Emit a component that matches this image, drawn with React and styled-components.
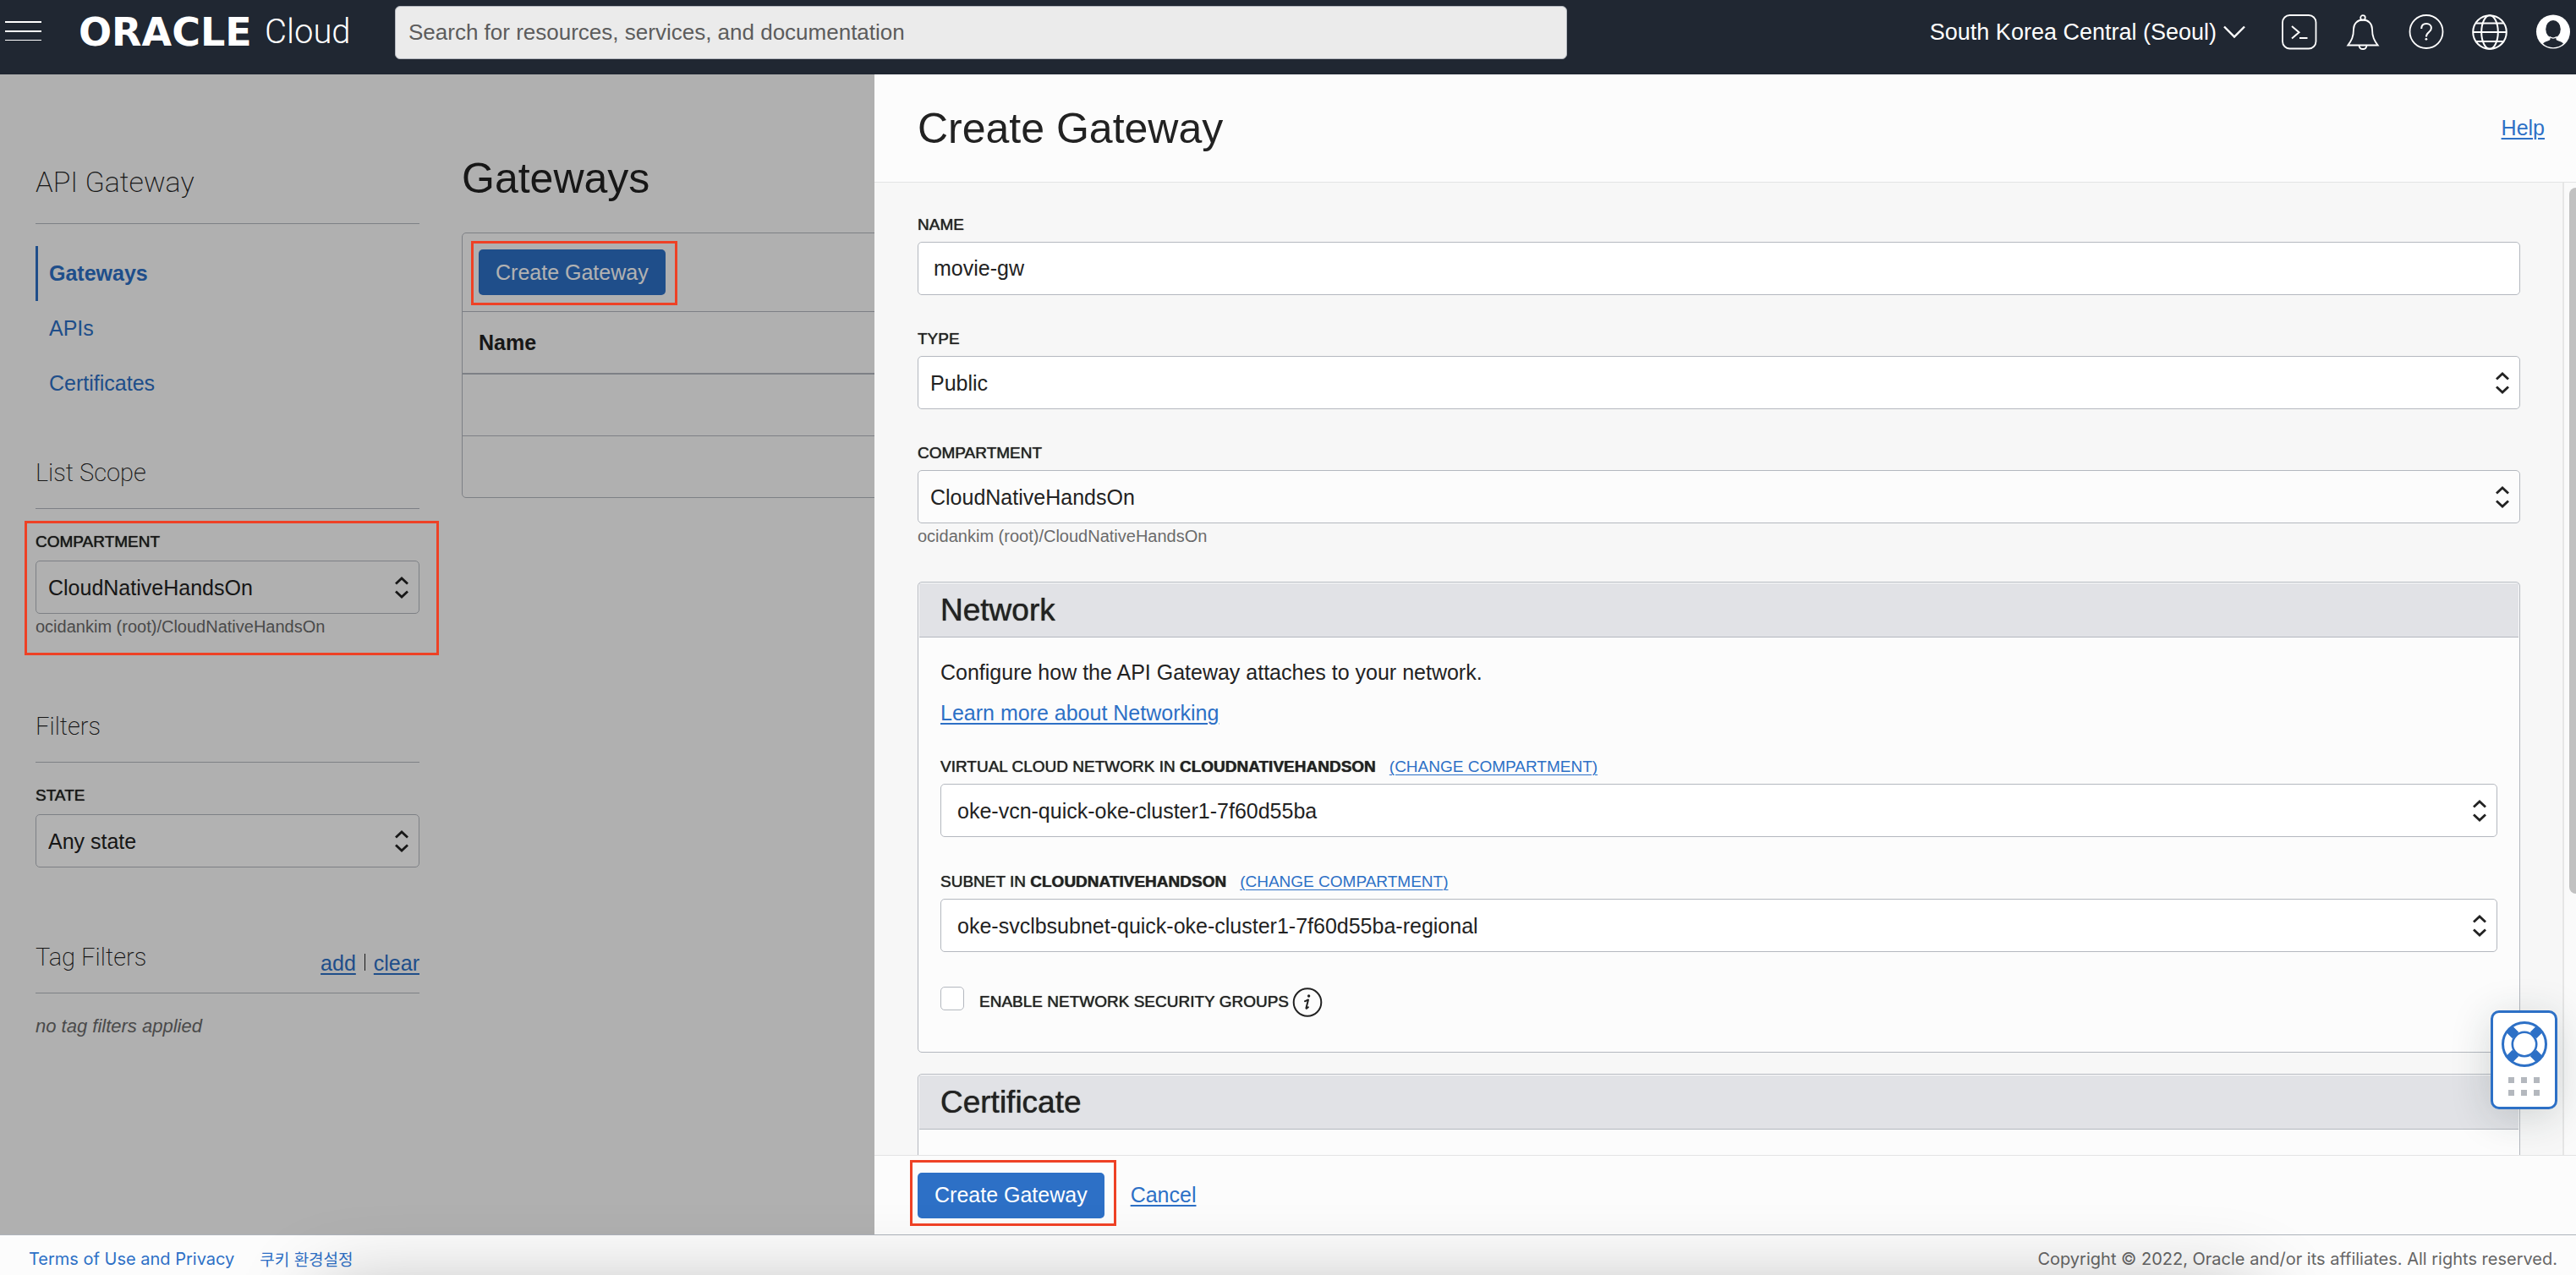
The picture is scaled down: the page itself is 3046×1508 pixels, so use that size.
import React, { useId } from "react";
import styled, { createGlobalStyle, css } from "styled-components";

const color = {
  ink: "#222222",
  muted: "#6b6b6b",
  link: "#2d70c6",
  line: "#b4b8bf",
  softLine: "#e3e4e5",
  surface: "#fcfcfc",
  canvas: "#f7f7f7",
  header: "#202732",
  alert: "#ee4125",
};

const sans = `"Liberation Sans", Arial, "Noto Sans CJK KR", sans-serif`;
const light = `Roboto, "Liberation Sans", sans-serif`;
const small = `Inter, "Noto Sans CJK KR", sans-serif`;

const GlobalStyle = createGlobalStyle`
  *, *::before, *::after { box-sizing: border-box; }
  body { margin: 0; overflow: hidden; background: ${color.surface}; }
  h1, h2, h3, p { margin: 0; }
`;

const mediumWeight = css`
  text-shadow: 0 0 1px currentColor;
`;

const Page = styled.div`
  display: flex;
  flex-direction: column;
  height: 100vh;
  font-family: ${sans};
  font-size: 25px;
  color: ${color.ink};
`;

/* ---------- top bar ---------- */

const TopBar = styled.header`
  display: flex;
  align-items: center;
  height: 88px;
  flex: none;
  padding: 0 6px 12px;
  background: ${color.header};
  color: #fff;
`;

const IconButton = styled.button`
  display: grid;
  place-items: center;
  width: ${(p) => p.$width || 42}px;
  height: 42px;
  padding: 0;
  border: 0;
  background: none;
  color: inherit;
`;

const Brand = styled.a`
  display: flex;
  align-items: center;
  gap: 12px;
  flex: none;
  width: 374px;
  margin-left: 44px;
  color: #fff;
  text-decoration: none;
  line-height: 48px;
`;

const BrandName = styled.span`
  width: 208px;
  font-family: "DejaVu Sans", sans-serif;
  font-weight: 700;
  font-size: 46px;
`;

const BrandProduct = styled.span`
  font-family: ${light};
  font-weight: 300;
  font-size: 40px;
`;

const Search = styled.input`
  flex: 0 1 1386px;
  min-width: 0;
  height: 63px;
  padding: 0 15px;
  border: 1px solid ${color.line};
  border-radius: 6px;
  background: #ebebeb;
  color: ${color.ink};
  font: 26px ${sans};
  appearance: none;
  &::placeholder {
    color: #5c5c5c;
    opacity: 1;
  }
`;

const TopActions = styled.div`
  display: flex;
  align-items: center;
  gap: 33px;
  margin-left: auto;
`;

const RegionButton = styled.button`
  display: flex;
  align-items: center;
  gap: 8px;
  margin-right: 10px;
  padding: 0;
  border: 0;
  background: none;
  color: #fff;
  font: 27px ${sans};
`;

/* ---------- shared parts ---------- */

const Body = styled.div`
  display: flex;
  flex: 1;
  min-height: 0;
`;

const Link = styled.a`
  color: ${color.link};
  text-decoration: underline;
  text-decoration-thickness: 2px;
  text-underline-offset: 3px;
`;

const PrimaryButton = styled.button`
  height: 54px;
  padding: 0 20px;
  border: 0;
  border-radius: 5px;
  background: ${color.link};
  color: #fff;
  font: 25px ${sans};
`;

const Highlight = styled.div`
  position: relative;
  &::after {
    content: "";
    position: absolute;
    inset: ${(p) => p.$inset};
    border: 3px solid ${color.alert};
    pointer-events: none;
    z-index: 2;
  }
`;

const Label = styled.label`
  font-size: 19px;
  line-height: 24px;
  text-transform: uppercase;
  ${mediumWeight}
`;

const LabelRow = styled.div`
  display: flex;
  gap: 16px;
  font-size: 19px;
  line-height: 24px;
`;

const ChangeLink = styled(Link)`
  font-size: 19px;
  text-decoration-thickness: 1px;
`;

const Field = styled.div`
  display: flex;
  flex-direction: column;
  gap: ${(p) => p.$gap || 8}px;
`;

const control = css`
  width: 100%;
  height: 63px;
  margin: 0;
  border: 1px solid ${color.line};
  border-radius: 5px;
  background: ${(p) => (p.$plain ? color.surface : "#fff")};
  color: ${color.ink};
  font: 25px ${sans};
  appearance: none;
`;

const TextInput = styled.input`
  ${control}
  padding: 0 18px;
`;

const SelectFrame = styled.div`
  display: grid;
  align-items: center;
  > * {
    grid-area: 1 / 1;
  }
  > svg {
    justify-self: end;
    margin-right: 12px;
    pointer-events: none;
  }
`;

const NativeSelect = styled.select`
  ${control}
  padding: 0 ${(p) => (p.$roomy ? 19 : 14)}px;
`;

const Hint = styled.p`
  margin-top: 3px;
  color: ${color.muted};
  font-size: 20px;
  line-height: 24px;
`;

/* ---------- list page behind the drawer ---------- */

const Backdrop = styled.div`
  position: relative;
  display: flex;
  gap: 50px;
  flex: 0 0 1034px;
  padding-left: 42px;
  overflow: hidden;
  background: ${color.surface};
  &::after {
    content: "";
    position: absolute;
    inset: 0;
    background: rgba(0, 0, 0, 0.3);
    z-index: 1;
  }
`;

const Sidebar = styled.aside`
  flex: 0 0 454px;
`;

const ServiceTitle = styled.h2`
  padding: 107px 0 29px;
  border-bottom: 1px solid ${color.line};
  font-family: ${light};
  font-weight: 200;
  font-size: 34px;
  line-height: 40px;
`;

const Nav = styled.nav`
  display: flex;
  flex-direction: column;
  margin: 26px 0 55px;
`;

const NavLink = styled.a`
  padding-left: 13px;
  border-left: 3px solid ${(p) => (p.$active ? color.link : "transparent")};
  color: ${color.link};
  font-weight: ${(p) => (p.$active ? 700 : 400)};
  line-height: 65px;
  text-decoration: none;
`;

const SideSection = styled.section`
  margin-bottom: 88px;
`;

const SideHeading = styled.div`
  display: flex;
  align-items: flex-end;
  justify-content: space-between;
  margin-bottom: 27px;
  padding-bottom: 24px;
  border-bottom: 1px solid ${color.line};
`;

const SideTitle = styled.h3`
  font-family: ${light};
  font-weight: 200;
  font-size: 29px;
  line-height: 36px;
`;

const TagActions = styled.div`
  display: flex;
  gap: 10px;
  line-height: 22px;
`;

const Divider = styled.span`
  width: 1px;
  height: 20px;
  background: ${color.ink};
`;

const EmptyNote = styled.p`
  color: ${color.muted};
  font-size: 22px;
  font-style: italic;
  line-height: 24px;
`;

const ListPage = styled.main`
  flex: 0 0 1200px;
  padding-top: 93px;
`;

const PageTitle = styled.h1`
  font-weight: 400;
  font-size: 50px;
  line-height: 60px;
`;

const ListCard = styled.div`
  margin-top: 34px;
  border: 1px solid ${color.line};
  border-radius: 5px;
`;

const Toolbar = styled.div`
  display: flex;
  padding: 19px;
  border-bottom: 1px solid ${color.line};
`;

const Table = styled.table`
  width: 100%;
  border-collapse: collapse;
  th {
    height: 73px;
    padding: 0 19px;
    border-bottom: 2px solid ${color.line};
    text-align: left;
  }
  td {
    height: 73px;
    padding: 0 19px;
  }
  tr + tr td {
    border-top: 1px solid ${color.line};
  }
`;

/* ---------- drawer ---------- */

const Drawer = styled.form`
  display: flex;
  flex-direction: column;
  flex: 1;
  min-width: 0;
  background: ${color.surface};
`;

const DrawerHeader = styled.div`
  display: flex;
  align-items: center;
  justify-content: space-between;
  flex: none;
  height: 128px;
  padding: 0 37px 0 51px;
  border-bottom: 1px solid ${color.softLine};
`;

const DrawerScroll = styled.div`
  display: flex;
  flex: 1;
  min-height: 0;
  overflow: hidden;
`;

const DrawerContent = styled.div`
  flex: 1;
  min-width: 0;
  padding: 38px 50px 0 51px;
  background: ${color.canvas};
`;

const Fields = styled.div`
  display: flex;
  flex-direction: column;
  gap: 40px;
  margin-bottom: 42px;
`;

const ScrollTrack = styled.div`
  flex: 0 0 16px;
  padding: 6px 0 0 6px;
  border-left: 2px solid #e6e6e6;
  background: #fafafa;
`;

const ScrollThumb = styled.div`
  height: 73%;
  border-radius: 8px 0 0 8px;
  background: #c1c1c1;
`;

const Panel = styled.section`
  margin-bottom: 25px;
  padding: 1px;
  border: 1px solid ${color.line};
  border-radius: 5px;
  background: ${color.surface};
`;

const PanelTitle = styled.h2`
  padding: 0 25px;
  border-bottom: 1px solid ${color.line};
  background: #e1e2e6;
  font-weight: 400;
  font-size: 37px;
  line-height: 63px;
  ${mediumWeight}
`;

const PanelBody = styled.div`
  display: flex;
  flex-direction: column;
  gap: 41px;
  padding: 25px 25px 40px;
`;

const Intro = styled.div`
  display: flex;
  flex-direction: column;
  align-items: flex-start;
  gap: 16px;
  margin-bottom: -5px;
  line-height: 32px;
`;

const CheckRow = styled.div`
  display: flex;
  align-items: center;
  height: 36px;
`;

const Checkbox = styled.input`
  align-self: flex-start;
  width: 28px;
  height: 28px;
  margin: 0 18px 0 0;
  border: 1px solid ${color.line};
  border-radius: 5px;
  background: #fff;
  appearance: none;
`;

const InfoButton = styled(IconButton)`
  height: 36px;
  margin-left: 4px;
`;

const DrawerFooter = styled.div`
  display: flex;
  align-items: center;
  gap: 31px;
  flex: none;
  height: 94px;
  padding-left: 51px;
  border-top: 1px solid ${color.softLine};
`;

/* ---------- bottom bar and floating items ---------- */

const BottomBar = styled.footer`
  display: flex;
  align-items: center;
  gap: 30px;
  flex: none;
  height: 48px;
  padding: 8px 22px 0 34px;
  border-top: 1px solid #aeb3bb;
  background: ${color.surface};
  font-family: ${small};
  font-size: 20px;
`;

const FooterLink = styled.a`
  color: ${color.link};
  text-decoration: none;
  &:lang(ko) {
    font-size: 19px;
  }
`;

const Copyright = styled.span`
  margin-left: auto;
  color: #666;
`;

const BottomShade = styled.div`
  position: fixed;
  left: 380px;
  right: 380px;
  top: calc(100vh + 22px);
  height: 300px;
  box-shadow: 0 0 100px rgba(0, 0, 0, 0.3);
  pointer-events: none;
`;

const SupportButton = styled.button`
  position: fixed;
  right: 22px;
  bottom: 196px;
  display: flex;
  flex-direction: column;
  align-items: center;
  gap: 12px;
  width: 79px;
  height: 117px;
  padding: 10px 0 0;
  border: 3px solid ${color.link};
  border-radius: 10px;
  background: #fff;
  box-shadow: 0 8px 48px rgba(30, 50, 50, 0.18);
`;

const Dots = styled.span`
  display: grid;
  grid-template-columns: repeat(3, 7px);
  grid-auto-rows: 7px;
  gap: 8px;
  i {
    background: #b4b8be;
  }
`;

/* ---------- icons ---------- */

const MenuIcon = () => (
  <svg width="43" height="26" viewBox="0 0 43 26" fill="#fff" aria-hidden="true">
    <rect y="0" width="43" height="2" />
    <rect y="11" width="43" height="2" />
    <rect y="22" width="43" height="1" />
  </svg>
);

const ChevronIcon = () => (
  <svg width="26" height="16" viewBox="0 0 26 16" fill="none" stroke="#fff" strokeWidth="2.400" aria-hidden="true">
    <path d="M1 1.500 13 13.500 25 1.500" />
  </svg>
);

const iconProps = {
  width: 42,
  height: 42,
  viewBox: "0 0 42 42",
  fill: "none",
  stroke: "#fff",
  strokeWidth: 1.8,
  "aria-hidden": true,
};

const TerminalIcon = () => (
  <svg {...iconProps}>
    <rect x="1" y="1" width="39.500" height="39.500" rx="8.500" />
    <path d="M12 14l8.500 7.200-8.500 7.200M21 28h9.500" strokeWidth="2" />
  </svg>
);

const BellIcon = () => (
  <svg {...iconProps}>
    <circle cx="21" cy="4" r="2.800" />
    <path d="M21 6.500c-6.500 0-11 4.500-11 11 0 9-2.500 13.500-6.700 19h35.400C34.500 31 32 26.500 32 17.500c0-6.500-4.500-11-11-11z" />
    <path d="M16.500 36.800c.3 2.600 2.100 4.200 4.500 4.200s4.200-1.600 4.500-4.200" />
  </svg>
);

const HelpIcon = () => (
  <svg {...iconProps}>
    <circle cx="21" cy="20.500" r="19.500" />
    <path d="M15.200 17c0-3.800 2.400-6 5.900-6 3.400 0 5.800 2.100 5.800 5.200 0 5-6 4.600-6 10.300" strokeWidth="2" />
    <circle cx="20.900" cy="29.300" r="1.400" fill="#fff" stroke="none" />
  </svg>
);

const GlobeIcon = () => (
  <svg {...iconProps} strokeWidth="2">
    <circle cx="21" cy="21" r="19.800" />
    <ellipse cx="21" cy="21" rx="9.800" ry="19.800" />
    <path d="M4.500 10.500h33M1.500 21h39M4.500 32h33" />
  </svg>
);

const AvatarIcon = () => (
  <svg {...iconProps} stroke="none">
    <circle cx="21" cy="20.500" r="20" fill="#fff" />
    <ellipse cx="21" cy="17.500" rx="8.800" ry="10.500" fill={color.header} />
    <path
      d="M9 34.500c1.500-1.800 4.800-2.800 7.800-4 .6-.3.900-1.500.9-3.500h6.600c0 2 .3 3.200.9 3.500 3 1.200 6.300 2.200 7.800 4-3 2.900-7.200 4.700-12 4.700S12 37.400 9 34.500z"
      fill={color.header}
    />
    <path d="M16.800 26.500c2.600 2 5.800 2 8.400 0" stroke="#fff" strokeWidth="1.200" fill="none" />
  </svg>
);

const InfoIcon = () => (
  <svg width="36" height="36" viewBox="0 0 36 36" aria-hidden="true">
    <circle cx="18" cy="18.500" r="16.300" fill="none" stroke={color.ink} strokeWidth="2" />
    <circle cx="19.600" cy="11" r="1.700" fill={color.ink} />
    <path
      d="M15 17.200c1.600-.6 2.700-1.300 4-1.700l-2.500 9.500c-.2.900.1 1 .7.600l1.700-1.400"
      fill="none"
      stroke={color.ink}
      strokeWidth="2"
      strokeLinecap="round"
      strokeLinejoin="round"
    />
  </svg>
);

const SortIcon = () => (
  <svg width="18" height="28" viewBox="0 0 18 28" fill="none" stroke="#222" strokeWidth="2.800" aria-hidden="true">
    <path d="M2 9.500 9 3l7 6.500M2 18.500 9 25l7-6.500" />
  </svg>
);

const LifebuoyIcon = () => (
  <svg width="54" height="54" viewBox="0 0 54 54" fill="none" stroke={color.link} aria-hidden="true">
    <g strokeWidth="10.500">
      <path d="M9 9l7.500 7.500M45 9l-7.500 7.500M9 45l7.500-7.500M45 45l-7.500-7.500" />
    </g>
    <circle cx="27" cy="27" r="25.500" strokeWidth="3" />
    <circle cx="27" cy="27" r="14.200" strokeWidth="2.600" />
  </svg>
);

/* ---------- composed fields ---------- */

function Select({ id, value, roomy, plain }) {
  return (
    <SelectFrame>
      <NativeSelect id={id} $roomy={roomy} $plain={plain} defaultValue={value}>
        <option>{value}</option>
      </NativeSelect>
      <SortIcon />
    </SelectFrame>
  );
}

function SelectField({ label, value, gap, plain }) {
  const id = useId();
  return (
    <Field $gap={gap}>
      <Label htmlFor={id}>{label}</Label>
      <Select id={id} value={value} plain={plain} />
    </Field>
  );
}

function ScopedSelectField({ label, scope, value }) {
  const id = useId();
  return (
    <Field>
      <LabelRow>
        <Label htmlFor={id}>
          {label} in <strong>{scope}</strong>
        </Label>
        <ChangeLink href="#">(CHANGE COMPARTMENT)</ChangeLink>
      </LabelRow>
      <Select id={id} value={value} roomy />
    </Field>
  );
}

const navItems = ["Gateways", "APIs", "Certificates"];
const compartment = "CloudNativeHandsOn";
const compartmentPath = "ocidankim (root)/CloudNativeHandsOn";

export default function App() {
  return (
    <Page>
      <GlobalStyle />
      <TopBar>
        <IconButton $width={43} aria-label="Menu">
          <MenuIcon />
        </IconButton>
        <Brand href="#">
          <BrandName>ORACLE</BrandName>
          <BrandProduct>Cloud</BrandProduct>
        </Brand>
        <Search
          type="search"
          aria-label="Search"
          placeholder="Search for resources, services, and documentation"
        />
        <TopActions>
          <RegionButton>
            South Korea Central (Seoul)
            <ChevronIcon />
          </RegionButton>
          <IconButton aria-label="Cloud Shell">
            <TerminalIcon />
          </IconButton>
          <IconButton aria-label="Notifications">
            <BellIcon />
          </IconButton>
          <IconButton aria-label="Help">
            <HelpIcon />
          </IconButton>
          <IconButton aria-label="Language">
            <GlobeIcon />
          </IconButton>
          <IconButton aria-label="Profile">
            <AvatarIcon />
          </IconButton>
        </TopActions>
      </TopBar>

      <Body>
        <Backdrop>
          <Sidebar>
            <ServiceTitle>API Gateway</ServiceTitle>
            <Nav>
              {navItems.map((item, i) => (
                <NavLink key={item} href="#" $active={i === 0}>
                  {item}
                </NavLink>
              ))}
            </Nav>
            <SideSection>
              <SideHeading>
                <SideTitle>List Scope</SideTitle>
              </SideHeading>
              <Highlight $inset="-13px -23px -22px -13px">
                <SelectField label="Compartment" value={compartment} gap={10} plain />
                <Hint>{compartmentPath}</Hint>
              </Highlight>
            </SideSection>
            <SideSection>
              <SideHeading>
                <SideTitle>Filters</SideTitle>
              </SideHeading>
              <SelectField label="State" value="Any state" gap={10} />
            </SideSection>
            <SideSection>
              <SideHeading>
                <SideTitle>Tag Filters</SideTitle>
                <TagActions>
                  <Link href="#">add</Link>
                  <Divider />
                  <Link href="#">clear</Link>
                </TagActions>
              </SideHeading>
              <EmptyNote>no tag filters applied</EmptyNote>
            </SideSection>
          </Sidebar>

          <ListPage>
            <PageTitle>Gateways</PageTitle>
            <ListCard>
              <Toolbar>
                <Highlight $inset="-10px -14px -12px -9px">
                  <PrimaryButton type="button">Create Gateway</PrimaryButton>
                </Highlight>
              </Toolbar>
              <Table>
                <thead>
                  <tr>
                    <th>Name</th>
                  </tr>
                </thead>
                <tbody>
                  <tr>
                    <td />
                  </tr>
                  <tr>
                    <td />
                  </tr>
                </tbody>
              </Table>
            </ListCard>
          </ListPage>
        </Backdrop>

        <Drawer onSubmit={(e) => e.preventDefault()}>
          <DrawerHeader>
            <PageTitle>Create Gateway</PageTitle>
            <Link href="#">Help</Link>
          </DrawerHeader>
          <DrawerScroll>
            <DrawerContent>
              <Fields>
                <Field>
                  <Label htmlFor="gateway-name">Name</Label>
                  <TextInput id="gateway-name" type="text" defaultValue="movie-gw" />
                </Field>
                <SelectField label="Type" value="Public" />
                <div>
                  <SelectField label="Compartment" value={compartment} plain />
                  <Hint>{compartmentPath}</Hint>
                </div>
              </Fields>

              <Panel>
                <PanelTitle>Network</PanelTitle>
                <PanelBody>
                  <Intro>
                    <p>Configure how the API Gateway attaches to your network.</p>
                    <Link href="#">Learn more about Networking</Link>
                  </Intro>
                  <ScopedSelectField
                    label="Virtual Cloud Network"
                    scope={compartment}
                    value="oke-vcn-quick-oke-cluster1-7f60d55ba"
                  />
                  <ScopedSelectField
                    label="Subnet"
                    scope={compartment}
                    value="oke-svclbsubnet-quick-oke-cluster1-7f60d55ba-regional"
                  />
                  <CheckRow>
                    <Checkbox id="enable-nsg" type="checkbox" />
                    <Label htmlFor="enable-nsg">Enable Network Security Groups</Label>
                    <InfoButton type="button" $width={36} aria-label="More information">
                      <InfoIcon />
                    </InfoButton>
                  </CheckRow>
                </PanelBody>
              </Panel>

              <Panel>
                <PanelTitle>Certificate</PanelTitle>
                <PanelBody />
              </Panel>
            </DrawerContent>
            <ScrollTrack>
              <ScrollThumb />
            </ScrollTrack>
          </DrawerScroll>
          <DrawerFooter>
            <Highlight $inset="-15px -14px -9px -9px">
              <PrimaryButton type="submit">Create Gateway</PrimaryButton>
            </Highlight>
            <Link href="#">Cancel</Link>
          </DrawerFooter>
        </Drawer>
      </Body>

      <BottomBar>
        <FooterLink href="#">Terms of Use and Privacy</FooterLink>
        <FooterLink href="#" lang="ko">
          쿠키 환경설정
        </FooterLink>
        <Copyright>Copyright © 2022, Oracle and/or its affiliates. All rights reserved.</Copyright>
      </BottomBar>

      <BottomShade />
      <SupportButton type="button" aria-label="Support">
        <LifebuoyIcon />
        <Dots>
          {Array.from({ length: 6 }, (_, i) => (
            <i key={i} />
          ))}
        </Dots>
      </SupportButton>
    </Page>
  );
}
